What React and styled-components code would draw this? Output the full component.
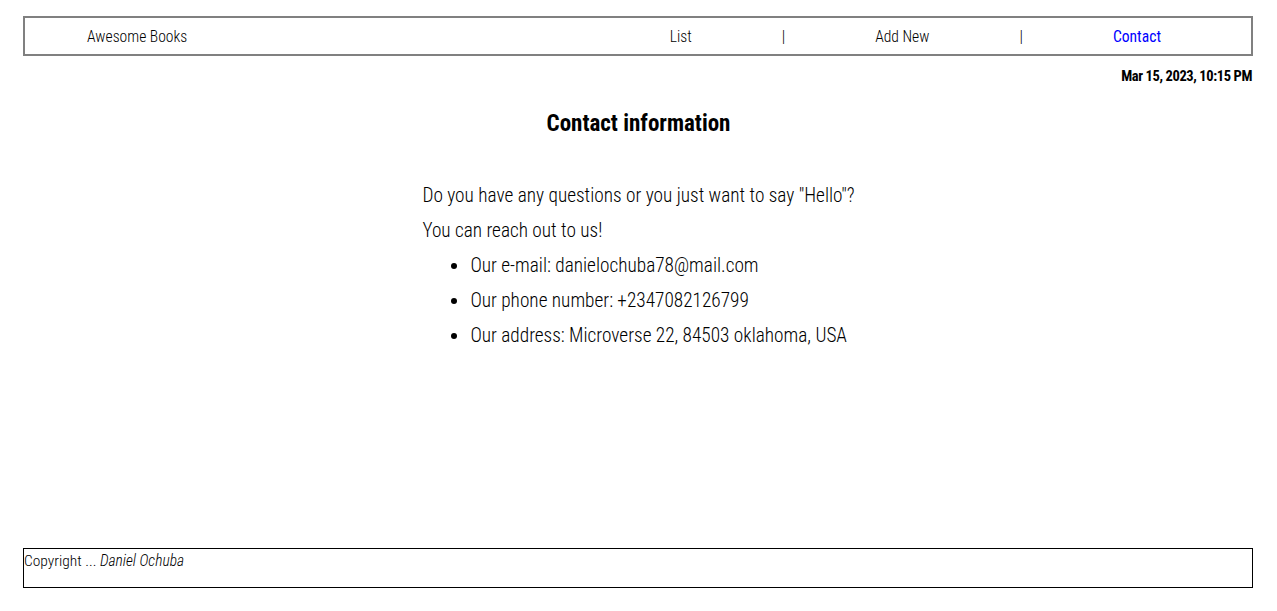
import styled, { createGlobalStyle } from 'styled-components';

const GlobalStyle = createGlobalStyle`
  body {
    margin: 8px;
    font-family: Roboto, "Liberation Sans", sans-serif;
    font-stretch: 75%;
    font-weight: 300;
    color: #000;
    background: #fff;
  }
`;

const Page = styled.div`
  display: flex;
  flex-direction: column;
  min-height: calc(611px - 16px);
`;

const Header = styled.header`
  display: flex;
  align-items: center;
  justify-content: space-between;
  height: 35px;
  margin: 8px 16px 0 15px;
  padding-top: 1px;
  border: 2px solid #808080;
`;

const Logo = styled.span`
  margin-left: 62px;
  font-size: 15.6px;
`;

const NavList = styled.ul`
  display: flex;
  align-items: center;
  gap: 90px;
  margin: 0 90px 0 0;
  padding: 0;
  list-style: none;
`;

const NavItem = styled.li`
  font-size: 15.6px;
  color: ${({ $active }) => ($active ? '#0000ff' : '#000')};
  font-weight: ${({ $active }) => ($active ? 400 : 300)};
`;

const DateLine = styled.p`
  margin: 12px 17px 0 0;
  text-align: right;
  font-size: 14.5px;
  font-weight: 700;
  letter-spacing: -0.4px;
`;

const Contact = styled.section`
  display: flex;
  flex-direction: column;
  align-items: center;
  flex: 1;
`;

const Title = styled.h2`
  margin: 25px 0 41px;
  font-size: 23px;
  font-weight: 700;
`;

const Body = styled.div`
  font-size: 19.3px;
  line-height: 35px;
`;

const Text = styled.p`
  margin: 0;
`;

const Details = styled.ul`
  margin: 0;
  padding-left: 48px;
`;

const Footer = styled.footer`
  height: 35px;
  margin: 0 16px 15px 15px;
  padding-top: 3px;
  border: 1px solid #000;
  font-size: 15.5px;
`;

export default function App() {
  return (
    <>
      <GlobalStyle />
      <Page>
        <Header>
          <Logo>Awesome Books</Logo>
          <NavList>
            <NavItem>List</NavItem>
            <NavItem>|</NavItem>
            <NavItem>Add New</NavItem>
            <NavItem>|</NavItem>
            <NavItem $active>Contact</NavItem>
          </NavList>
        </Header>
        <DateLine>Mar 15, 2023, 10:15 PM</DateLine>
        <Contact>
          <Title>Contact information</Title>
          <Body>
            <Text>Do you have any questions or you just want to say "Hello"?</Text>
            <Text>You can reach out to us!</Text>
            <Details>
              <li>Our e-mail: danielochuba78@mail.com</li>
              <li>Our phone number: +2347082126799</li>
              <li>Our address: Microverse 22, 84503 oklahoma, USA</li>
            </Details>
          </Body>
        </Contact>
        <Footer>
          Copyright ... <em>Daniel Ochuba</em>
        </Footer>
      </Page>
    </>
  );
}
